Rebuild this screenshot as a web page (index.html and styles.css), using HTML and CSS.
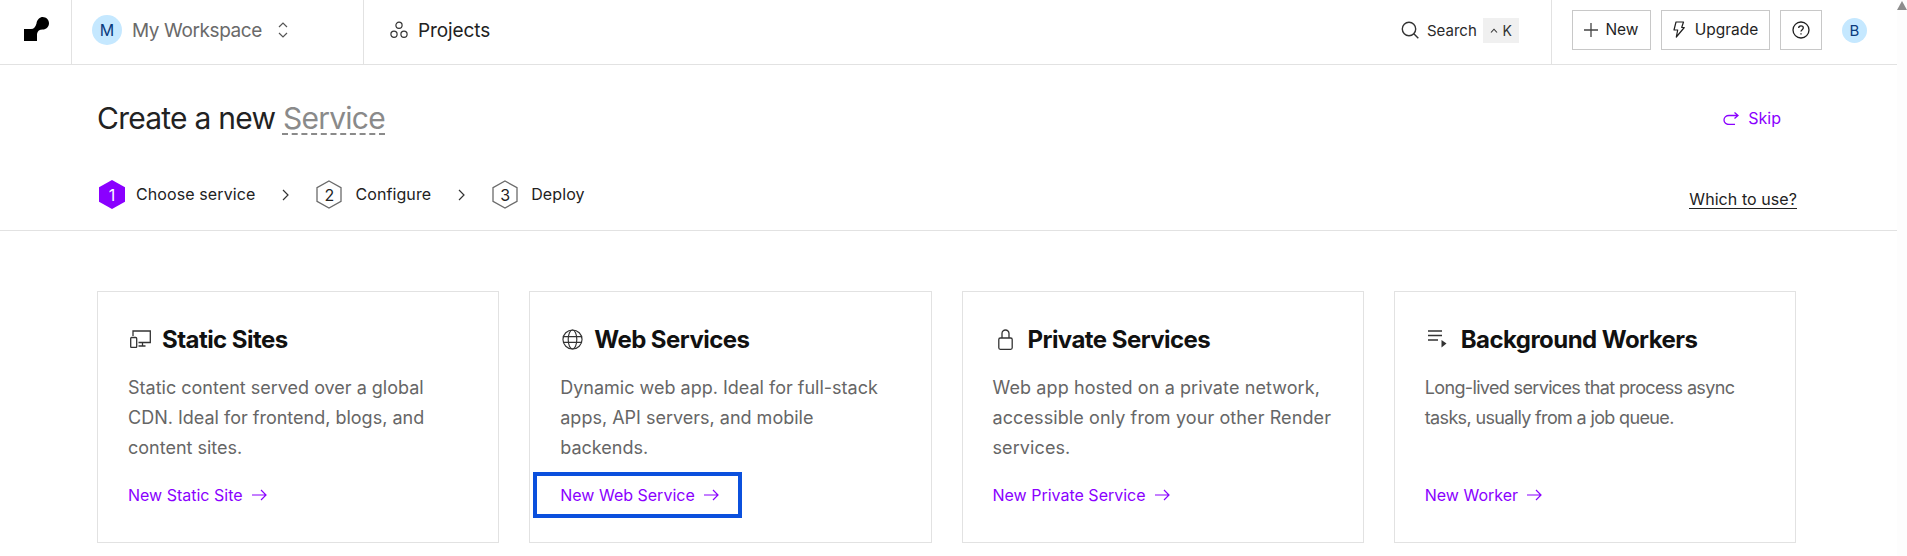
FILE: index.html
```html
<!DOCTYPE html>
<html lang="en">
<head>
<meta charset="utf-8">
<title>Create a new Service</title>
<link rel="stylesheet" href="styles.css">
</head>
<body>
<div class="page">
  <header class="topbar">
    <a class="logo-cell" aria-label="Home">
      <svg class="logo" viewBox="0 0 25 24"><path d="M0 12H7C10 12 11.500 10 12.500 6.500 13 2.500 16 0 18.700 0 22.200 0 25 2.800 25 6.300 25 9.800 22.200 12.500 18.700 12.600 15.500 12.700 13.500 14 13 17V24H0Z"/></svg>
    </a>
    <div class="workspace-cell">
      <span class="avatar avatar-lg">M</span>
      <span class="workspace-name">My Workspace</span>
      <svg class="updown" viewBox="0 0 10 18" fill="none" stroke="currentColor" stroke-width="1.200"><path d="M1 6l4-4 4 4M1 12l4 4 4-4"/></svg>
    </div>
    <div class="projects-cell">
      <svg class="projects-icon" viewBox="0 0 18 18" fill="none" stroke="currentColor" stroke-width="1.200"><circle cx="9" cy="4.300" r="3.100"/><circle cx="4" cy="13.300" r="3.100"/><circle cx="14" cy="13.300" r="3.100"/></svg>
      <span>Projects</span>
    </div>
    <div class="search-cell">
      <svg class="search-icon" viewBox="0 0 18 18" fill="none" stroke="currentColor" stroke-width="1.400"><circle cx="8" cy="8" r="6.700"/><path d="M12.800 12.800L17.300 17.300"/></svg>
      <span class="search-label">Search</span>
      <span class="kbd"><svg class="caret" viewBox="0 0 8 5" fill="none" stroke="currentColor" stroke-width="1.100"><path d="M1 4.500l3-3.300 3 3.300"/></svg><span>K</span></span>
    </div>
    <div class="actions-cell">
      <button class="btn btn-new"><svg class="btn-icon" viewBox="0 0 14 14" fill="none" stroke="currentColor" stroke-width="1.300"><path d="M7 0v14M0 7h14"/></svg>New</button>
      <button class="btn btn-upgrade"><svg class="bolt" viewBox="0 0 12 17" fill="none" stroke="currentColor" stroke-width="1.200" stroke-linejoin="round"><path d="M3 1h7.500L8.700 6.500h2.600L3.300 16l1.400-7H1z"/></svg>Upgrade</button>
      <button class="btn btn-help" aria-label="Help"><svg class="help" viewBox="0 0 18 18" fill="none" stroke="currentColor" stroke-width="1.300"><circle cx="9" cy="9" r="8"/><path d="M6.700 7c0-1.400 1-2.200 2.300-2.200s2.300.8 2.300 2c0 1.900-2.300 1.800-2.300 3.700"/><path d="M9 12.300v1.300"/></svg></button>
      <span class="avatar avatar-sm">B</span>
    </div>
  </header>

  <section class="intro">
    <div class="title-row">
      <h1 class="title">Create a new <span class="title-service">Service</span></h1>
      <a class="skip"><svg class="skip-icon" viewBox="0 0 16 13" fill="none" stroke="currentColor" stroke-width="1.300"><path d="M15 3.500H6a5 4.500 0 0 0 0 9h6M11.500 0.500l3.500 3-3.500 3"/></svg>Skip</a>
    </div>
    <div class="steps-row">
      <ol class="steps">
        <li class="step">
          <span class="hex hex-active"><svg viewBox="0 0 26 29"><path d="M13 0l13 7.200v14.600L13 29 0 21.800V7.200z"/></svg><b>1</b></span>
          <span class="step-label">Choose service</span>
        </li>
        <li class="chev"><svg viewBox="0 0 7 12" fill="none" stroke="currentColor" stroke-width="1.200"><path d="M1 1l5 5-5 5"/></svg></li>
        <li class="step">
          <span class="hex"><svg viewBox="0 0 26 29"><path d="M13 1l12 6.700v13.600L13 28 1 21.300V7.700z"/></svg><b>2</b></span>
          <span class="step-label">Configure</span>
        </li>
        <li class="chev"><svg viewBox="0 0 7 12" fill="none" stroke="currentColor" stroke-width="1.200"><path d="M1 1l5 5-5 5"/></svg></li>
        <li class="step">
          <span class="hex"><svg viewBox="0 0 26 29"><path d="M13 1l12 6.700v13.600L13 28 1 21.300V7.700z"/></svg><b>3</b></span>
          <span class="step-label">Deploy</span>
        </li>
      </ol>
      <a class="which">Which to use?</a>
    </div>
  </section>

  <main class="cards">
    <article class="card">
      <h2 class="card-title"><svg class="card-icon icon-static" viewBox="0 0 21 18" fill="none" stroke="currentColor" stroke-width="1.300"><path d="M3 6V1h17.300v11.500H8.500M12.500 12.500v3.500M8.500 16h7"/><rect x="0.700" y="7.500" width="6" height="10" rx="1"/></svg>Static Sites</h2>
      <p class="card-text">Static content served over a global<br>CDN. Ideal for frontend, blogs, and<br>content sites.</p>
      <a class="card-link">New Static Site<svg class="arrow" viewBox="0 0 15 12" fill="none" stroke="currentColor" stroke-width="1.200"><path d="M0 6h14M9 1l5 5-5 5"/></svg></a>
    </article>
    <article class="card">
      <h2 class="card-title"><svg class="card-icon icon-globe" viewBox="0 0 22 22" fill="none" stroke="currentColor" stroke-width="1.200"><circle cx="11" cy="11" r="10"/><ellipse cx="11" cy="11" rx="4.500" ry="10"/><path d="M1 8h20M1 14h20"/></svg>Web Services</h2>
      <p class="card-text">Dynamic web app. Ideal for full-stack<br>apps, API servers, and mobile<br>backends.</p>
      <a class="card-link card-link-marked">New Web Service<svg class="arrow" viewBox="0 0 15 12" fill="none" stroke="currentColor" stroke-width="1.200"><path d="M0 6h14M9 1l5 5-5 5"/></svg></a>
    </article>
    <article class="card">
      <h2 class="card-title"><svg class="card-icon icon-lock" viewBox="0 0 15 21" fill="none" stroke="currentColor" stroke-width="1.300"><rect x="0.800" y="9" width="13.400" height="11.300" rx="1.500"/><path d="M4 9V4.500a3.500 3.500 0 0 1 7 0V9"/></svg>Private Services</h2>
      <p class="card-text text-wide">Web app hosted on a private network,<br>accessible only from your other Render<br>services.</p>
      <a class="card-link">New Private Service<svg class="arrow" viewBox="0 0 15 12" fill="none" stroke="currentColor" stroke-width="1.200"><path d="M0 6h14M9 1l5 5-5 5"/></svg></a>
    </article>
    <article class="card">
      <h2 class="card-title"><svg class="card-icon icon-queue" viewBox="0 0 19 18" fill="none" stroke="currentColor" stroke-width="1.300"><path d="M0 1h14M0 5.500h14M0 10h10"/><path d="M13.500 10l5 3.500-5 4z" fill="currentColor" stroke="none"/></svg>Background Workers</h2>
      <p class="card-text text-tight">Long-lived services that process async<br>tasks, usually from a job queue.</p>
      <a class="card-link">New Worker<svg class="arrow" viewBox="0 0 15 12" fill="none" stroke="currentColor" stroke-width="1.200"><path d="M0 6h14M9 1l5 5-5 5"/></svg></a>
    </article>
  </main>
</div>
<aside class="scrollbar"><span class="scroll-arrow"></span></aside>
</body>
</html>
```

FILE: styles.css
```css
* { box-sizing: border-box; }
html, body { margin: 0; height: 100%; overflow: hidden; }
body {
  display: flex;
  font-family: Inter, "Liberation Sans", sans-serif;
  color: #1f1f1f;
  background: #fff;
}
.page { width: 1897px; flex: none; }
.scrollbar { flex: 1; background: #fdfdfd; position: relative; }
.scroll-arrow {
  position: absolute; top: 1px; right: 0;
  width: 0; height: 0;
  border-left: 5px solid transparent;
  border-right: 5px solid transparent;
  border-bottom: 9px solid #8c8c8c;
}

/* top bar */
.topbar { display: flex; height: 65px; border-bottom: 1px solid #e2e2e2; align-items: stretch; }
.logo-cell, .workspace-cell, .projects-cell, .search-cell, .actions-cell { padding-bottom: 4px; }
.logo-cell { width: 72px; flex: none; border-right: 1px solid #e2e2e2; display: flex; align-items: center; padding-left: 24px; }
.logo { width: 25px; height: 24px; display: block; fill: #000; margin-top: -2px; }
.workspace-cell { width: 292px; flex: none; border-right: 1px solid #e2e2e2; display: flex; align-items: center; padding-left: 20px; }
.avatar { border-radius: 50%; background: #c5e8ff; color: #0b3b7d; display: flex; align-items: center; justify-content: center; flex: none; }
.avatar-lg { width: 30px; height: 30px; font-size: 16px; }
.avatar-sm { width: 25px; height: 25px; font-size: 15px; margin-left: 10px; }
.workspace-name { font-size: 19px; letter-spacing: -0.4px; color: #6a6a6a; margin-left: 10px; width: 146px; white-space: nowrap; }
.updown { width: 10px; height: 18px; color: #555; }
.projects-cell { display: flex; align-items: center; padding-left: 26px; font-size: 19px; letter-spacing: -0.1px; color: #222; flex: none; width: 1037px; }
.projects-icon { width: 18px; height: 18px; margin-right: 10px; color: #333; }
.search-cell { display: flex; align-items: center; width: 151px; flex: none; border-right: 1px solid #e2e2e2; }
.search-icon { width: 18px; height: 18px; margin-right: 8px; color: #333; flex: none; }
.search-label { color: #2a2a2a; font-size: 15px; }
.kbd { margin-left: 6px; height: 25px; width: 36px; background: #f0f0f0; display: flex; align-items: center; justify-content: center; gap: 5px; font-size: 14px; color: #333; }
.caret { width: 8px; height: 5px; margin-top: 1px; }
.actions-cell { display: flex; align-items: center; gap: 10px; padding-left: 20px; }
.btn { height: 40px; border: 1px solid #c8c8c8; background: #fff; display: flex; align-items: center; justify-content: center; font: inherit; font-size: 15.5px; color: #1f1f1f; padding: 0 0 1px; }
.btn-new { width: 79px; }
.btn-upgrade { width: 109px; }
.btn-help { width: 42px; }
.btn-icon { width: 14px; height: 14px; margin-right: 7px; color: #444; }
.bolt { width: 12px; height: 17px; margin-right: 10px; }
.help { width: 18px; height: 18px; }

/* intro */
.intro { height: 166px; border-bottom: 1px solid #e2e2e2; padding: 0 100px 0 97px; display: flex; flex-direction: column; }
.title-row { display: flex; justify-content: space-between; align-items: center; padding-top: 33px; height: 73px; }
.title { margin: 0; font-size: 30px; font-weight: 400; letter-spacing: -0.75px; color: #222; white-space: nowrap; }
.title-service { color: #8a8a8a; text-decoration: underline dashed #8a8a8a 2px; text-underline-offset: 4px; }
.skip { display: flex; align-items: center; font-size: 16px; color: #8a00ff; margin-right: 16px; }
.skip-icon { width: 16px; height: 13px; margin-right: 9px; }
.steps-row { display: flex; justify-content: space-between; align-items: center; margin-top: 42px; }
.steps { list-style: none; margin: 0; padding: 0 0 0 2px; display: flex; align-items: center; }
.step { display: flex; align-items: center; gap: 13px; font-size: 16px; letter-spacing: 0.1px; color: #222; }
.step-label { padding-bottom: 2px; }
.hex { width: 26px; height: 29px; position: relative; display: flex; align-items: center; justify-content: center; flex: none; }
.hex svg { position: absolute; inset: 0; width: 100%; height: 100%; fill: none; stroke: #6b6b6b; stroke-width: 1.300; }
.hex b { position: relative; font-weight: 400; font-size: 16px; color: #222; }
.hex-active { margin-right: -2px; }
.hex-active svg { fill: #8a00ff; stroke: none; }
.hex-active b { color: #fff; }
.chev { margin: 0 27px; line-height: 0; color: #333; }
.chev svg { width: 7px; height: 12px; }
.which { font-size: 16px; letter-spacing: 0.07px; color: #222; border-bottom: 1px solid #222; margin-top: 9px; line-height: 18px; }

/* cards */
.cards { display: grid; grid-template-columns: repeat(4, 1fr); gap: 30px; padding: 60px 101px 0 97px; }
.card { height: 252px; border: 1px solid #e2e2e2; padding: 29px 30px 30px; display: flex; flex-direction: column; }
.card-title { margin: 0; font-size: 24px; font-weight: 700; letter-spacing: -0.55px; color: #111; display: flex; align-items: center; height: 36px; white-space: nowrap; }
.card-icon { flex: none; color: #333; }
.icon-static { width: 21px; height: 18px; margin: 0 11px 0 2px; }
.icon-globe { width: 21px; height: 21px; margin: 0 11px 0 2px; }
.icon-lock { width: 15px; height: 21px; margin: 0 15px 0 5px; }
.icon-queue { width: 19px; height: 18px; margin: 0 14px 0 3px; }
.card-text { margin: 16px 0 0; font-size: 18px; line-height: 30px; letter-spacing: 0; color: #666; white-space: nowrap; }
.text-wide { letter-spacing: 0.1px; }
.text-tight { letter-spacing: -0.65px; }
.card-link { margin-top: auto; margin-bottom: 7px; display: inline-flex; align-items: center; align-self: flex-start; font-size: 16px; color: #8a00ff; position: relative; }
.arrow { width: 15px; height: 12px; margin-left: 9px; }
.card-link-marked::after { content: ""; position: absolute; left: -27px; right: -23px; top: -13px; bottom: -13px; border: 4px solid #0b50dd; }
```
